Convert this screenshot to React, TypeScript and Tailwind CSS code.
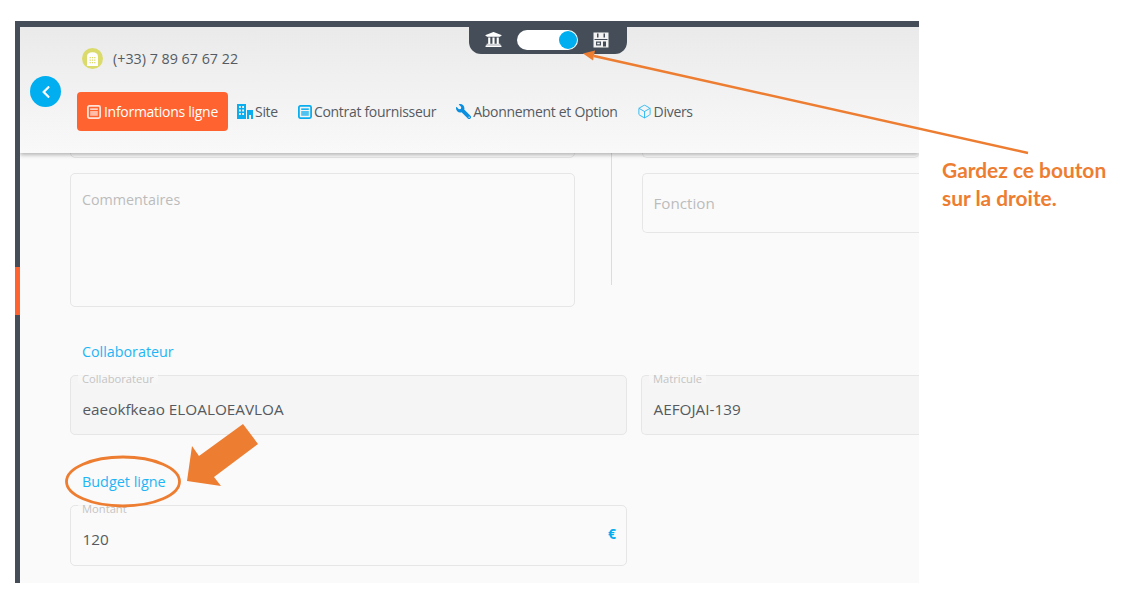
import React from "react";
import { FaUniversity, FaWrench, FaChevronLeft } from "react-icons/fa";
import { Box } from "lucide-react";

function DocIcon({ color, inner, className }: { color: string; inner: string; className?: string }) {
  return (
    <svg viewBox="0 0 14 14" width="14" height="14" className={className}>
      <rect x="0.9" y="0.9" width="12.2" height="12.2" rx="1.5" fill="none" stroke={color} strokeWidth="1.8" />
      <rect x="3.2" y="3.4" width="7.6" height="1.5" fill={inner} />
      <rect x="3.2" y="6" width="7.6" height="4.8" fill={inner} opacity="0.7" />
    </svg>
  );
}

function CityIcon() {
  return (
    <svg viewBox="0 0 16 15" width="16" height="15">
      <path fill="#0AAEEF" fillRule="evenodd" d="M0 0h9v15H0zM2 2v2h1.8V2zM5.2 2v2H7V2zM2 5.5v2h1.8v-2zM5.2 5.5v2H7v-2zM2 9v2h1.8V9zM5.2 9v2H7V9z" />
      <path fill="#0AAEEF" d="M10 6h6v9h-2v-4h-2v4h-2z" />
    </svg>
  );
}

function StoreIcon() {
  return (
    <svg viewBox="0 0 16 16" width="16" height="16">
      <path
        fill="#f2f2f2"
        fillRule="evenodd"
        d="M0.5 0.5h15v15h-15zM4 1.5v4h1.5v-4zM10.5 1.5v4H12v-4zM1.5 7v1h13V7zM3 9.5v4h5v-4zM10 9.5v5h3v-5z"
      />
      <rect x="4.2" y="10.7" width="2.6" height="1.6" fill="#f2f2f2" />
    </svg>
  );
}

function PhoneBadge() {
  return (
    <span className="flex h-[21px] w-[21px] items-center justify-center rounded-full bg-[#DBDB6B]">
      <svg viewBox="0 0 12 15" width="11" height="14">
        <path
          fill="#fff"
          fillRule="evenodd"
          d="M0 5Q0 0 6 0T12 5V15H0zM2.8 5.2v1.4h1.4V5.2zM5.3 5.2v1.4h1.4V5.2zM7.8 5.2v1.4h1.4V5.2zM2.8 8v1.4h1.4V8zM5.3 8v1.4h1.4V8zM7.8 8v1.4h1.4V8zM2.8 10.8v1.4h1.4v-1.4zM5.3 10.8v1.4h1.4v-1.4zM7.8 10.8v1.4h1.4v-1.4z"
        />
      </svg>
    </span>
  );
}

function Tab({ icon, label, className }: { icon: React.ReactNode; label: string; className?: string }) {
  return (
    <div className={`flex items-center gap-[2px] text-[14px] tracking-[-0.3px] text-[#555b62] ${className ?? ""}`}>
      {icon}
      <span>{label}</span>
    </div>
  );
}

function Field({ label, value, className, filled }: { label: string; value: string; className: string; filled?: boolean }) {
  return (
    <div className={`relative h-[60px] rounded-[5px] border border-[#e6e6e6] ${filled ? "bg-[#f5f5f5]" : ""} ${className}`}>
      <span className="absolute -top-[4px] left-[7px] bg-gradient-to-b from-[#fafafa] to-transparent px-[4px] text-[11.2px] leading-[14px] text-[#c4c4c4]">
        {label}
      </span>
      <div className="pl-[11.5px] pt-[24px] text-[15.3px] leading-[18px] text-[#555a60]">{value}</div>
    </div>
  );
}

export default function App() {
  return (
    <div className="relative h-[602px] w-[1121px] overflow-hidden bg-white font-['Open_Sans',sans-serif]">
      <div className="pl-[15px] pt-[21px]">
        <div className="relative flex h-[562px] w-[904px] border-t-[6px] border-l-[5px] border-[#454e58] bg-[#fafafa]">
          <div className="absolute -left-[5px] top-[240px] h-[48px] w-[5px] bg-[#ff6330]" />
          <div className="flex w-full flex-col overflow-hidden">
            {/* Header */}
            <div className="relative z-10 flex h-[126px] shrink-0 bg-gradient-to-b from-[#eaeaea] to-[#f9f9f9] shadow-[0_2px_4px_rgba(0,0,0,0.28)]">
              <div className="flex w-[57px] shrink-0 items-start justify-end pt-[49px]">
                <button className="mr-[16px] flex h-[31px] w-[31px] items-center justify-center rounded-full bg-[#01AEF0] text-white">
                  <FaChevronLeft size={14} />
                </button>
              </div>
              <div className="flex flex-col">
                <div className="ml-[5px] mt-[21px] flex items-center gap-[10px] text-[14.3px] leading-[21px] text-[#555b62]">
                  <PhoneBadge />
                  <span>(+33) 7 89 67 67 22</span>
                </div>
                <div className="mt-[23px] flex items-center">
                  <div className="flex h-[39px] w-[151px] items-center justify-center gap-[3px] rounded-[4px] bg-[#FF6330] text-[14px] tracking-[-0.28px] text-white">
                    <DocIcon color="#ffe3d8" inner="#ffe3d8" />
                    <span>Informations ligne</span>
                  </div>
                  <div className="ml-[9px] flex items-center">
                    <Tab icon={<CityIcon />} label="Site" />
                    <Tab className="ml-[20px]" icon={<DocIcon color="#0AAEEF" inner="#0AAEEF" />} label="Contrat fournisseur" />
                    <Tab className="ml-[20px]" icon={<FaWrench size={15} color="#0A8FE0" className="-scale-x-100" />} label="Abonnement et Option" />
                    <Tab className="ml-[19px]" icon={<Box size={15} color="#2DB9F2" strokeWidth={1.5} />} label="Divers" />
                  </div>
                </div>
              </div>
              {/* Toggle */}
              <div className="absolute left-[449px] top-0 flex h-[27px] w-[158px] items-center justify-center gap-[15px] rounded-b-[12px] bg-[#454e58] pb-[2px] pr-[2px]">
                <FaUniversity size={17} color="#fff" />
                <div className="flex h-[20px] w-[61px] items-center justify-end rounded-full bg-white pr-[1px]">
                  <span className="h-[18px] w-[18px] rounded-full bg-[#01AEF0]" />
                </div>
                <StoreIcon />
              </div>
            </div>
            {/* Content */}
            <div className="relative flex-1 overflow-hidden pl-[50px]">
              <div className="flex">
                <div className="w-[505px]">
                  <div className="-mt-[10px] h-[15px] rounded-[5px] border border-[#e6e6e6]" />
                  <div className="mt-[15px] h-[134px] rounded-[5px] border border-[#e6e6e6] px-[11px] pt-[16px] text-[14.3px] leading-[20px] text-[#bcbcbc]">
                    Commentaires
                  </div>
                </div>
                <div className="ml-[36px] h-[132px] w-px bg-[#dcdcdc]" />
                <div className="ml-[30px] flex-1">
                  <div className="-mt-[10px] h-[15px] rounded-[5px] border border-r-0 border-[#e6e6e6]" />
                  <div className="mt-[15px] flex h-[60px] items-center rounded-l-[5px] border border-r-0 border-[#e6e6e6] pl-[10.5px] text-[15.2px] text-[#bcbcbc]">
                    Fonction
                  </div>
                </div>
              </div>
              <div className="mt-[35px] pl-[12px] text-[14.3px] leading-[20px] text-[#1DB5F5]">Collaborateur</div>
              <div className="mt-[13px] flex gap-[14px]">
                <Field className="w-[557px] shrink-0" label="Collaborateur" value="eaeokfkeao ELOALOEAVLOA" filled />
                <Field className="flex-1 rounded-r-none border-r-0" label="Matricule" value="AEFOJAI-139" filled />
              </div>
              <div className="mt-[37px] pl-[12px] text-[14.4px] leading-[20px] text-[#1DB5F5]">Budget ligne</div>
              <div className="mt-[13px] w-[557px]">
                <div className="relative">
                  <Field className="h-[61px] w-full" label="Montant" value="120" />
                  <span className="absolute right-[11px] top-[20px] text-[14px] font-bold leading-[18px] text-[#01AEF0]">€</span>
                </div>
              </div>
            </div>
          </div>
        </div>
      </div>
      {/* Annotations */}
      <svg className="absolute left-0 top-0 z-20" width="1121" height="602" viewBox="0 0 1121 602" fill="none">
        <line x1="1028" y1="153" x2="594" y2="56" stroke="#ED7D31" strokeWidth="2.4" />
        <path d="M583 53.5 L595 50.5 L593 60.5 Z" fill="#ED7D31" />
        <ellipse cx="123" cy="481.5" rx="56.5" ry="24.5" stroke="#ED7D31" strokeWidth="2.8" />
        <path d="M243 424 L258 444 L214 477 L221 486 L187 481 L192 446 L199 456 Z" fill="#ED7D31" />
      </svg>
      <div className="absolute left-[942px] top-[156px] z-20 font-['Lato',sans-serif] text-[20.9px] font-bold leading-[28px] text-[#ED7D31]">
        Gardez ce bouton
        <br />
        sur la droite.
      </div>
    </div>
  );
}
